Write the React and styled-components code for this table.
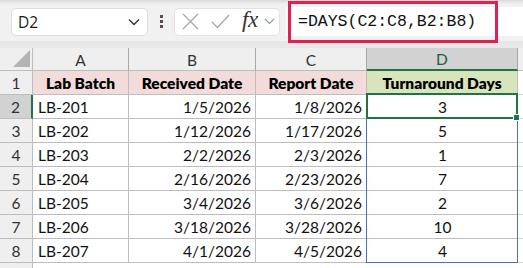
import React from "react";
import styled, { createGlobalStyle } from "styled-components";

const rows = [
  ["LB-201", "1/5/2026", "1/8/2026", "3"],
  ["LB-202", "1/12/2026", "1/17/2026", "5"],
  ["LB-203", "2/2/2026", "2/3/2026", "1"],
  ["LB-204", "2/16/2026", "2/23/2026", "7"],
  ["LB-205", "3/4/2026", "3/6/2026", "2"],
  ["LB-206", "3/18/2026", "3/28/2026", "10"],
  ["LB-207", "4/1/2026", "4/5/2026", "4"]
];

export default function App() {
  return (
    <>
      <GlobalStyle />
      <Page>
        <Toolbar>
          <NameBox>
            <NameText>D2</NameText>
            <Chevron width="12" height="8" viewBox="0 0 12 8">
              <path d="M1 1.5 L6 6.5 L11 1.5" fill="none" stroke="#333" strokeWidth="1.4" />
            </Chevron>
          </NameBox>
          <Dots>
            <i />
            <i />
            <i />
          </Dots>
          <FxBox>
            <svg width="17" height="17" viewBox="0 0 17 17">
              <path d="M1 1 L16 16 M16 1 L1 16" stroke="#a8a8a8" strokeWidth="1.3" />
            </svg>
            <svg width="19" height="15" viewBox="0 0 19 15">
              <path d="M1 8 L6.5 13.5 L18 1" fill="none" stroke="#a8a8a8" strokeWidth="1.3" />
            </svg>
            <Fx>fx</Fx>
            <svg width="11" height="7" viewBox="0 0 11 7">
              <path d="M1 1 L5.5 5.5 L10 1" fill="none" stroke="#999" strokeWidth="1.2" />
            </svg>
          </FxBox>
          <FormulaBox>
            <Formula>=DAYS(C2:C8,B2:B8)</Formula>
          </FormulaBox>
        </Toolbar>
        <Band />
        <Sheet>
          <Corner>
            <svg width="18" height="18" viewBox="0 0 18 18">
              <path d="M17 0 L17 17 L0 17 Z" fill="#b4b4b4" />
            </svg>
          </Corner>
          {["A", "B", "C", "D"].map((c) => (
            <ColHead key={c} $active={c === "D"}>
              {c}
            </ColHead>
          ))}
          <Filler $head />

          <RowHead>1</RowHead>
          <HeadCell>Lab Batch</HeadCell>
          <HeadCell>Received Date</HeadCell>
          <HeadCell>Report Date</HeadCell>
          <HeadCell $green>Turnaround Days</HeadCell>
          <Filler />

          {rows.map((r, i) => (
            <React.Fragment key={r[0]}>
              <RowHead $active={i === 0}>{i + 2}</RowHead>
              <Cell>{r[0]}</Cell>
              <Cell $right>{r[1]}</Cell>
              <Cell $right>{r[2]}</Cell>
              <Cell $center $range $current={i === 0} $last={i === rows.length - 1}>
                {r[3]}
                {i === 0 && <Handle />}
              </Cell>
              <Filler />
            </React.Fragment>
          ))}
          <RowHead $blank />
        </Sheet>
      </Page>
    </>
  );
}

const GlobalStyle = createGlobalStyle`
  body {
    margin: 0;
    background: #fff;
  }
  * {
    box-sizing: border-box;
  }
`;

const Page = styled.div`
  width: 523px;
  height: 268px;
  overflow: hidden;
  background: #fff;
`;

const Toolbar = styled.div`
  height: 41px;
  display: flex;
  align-items: center;
  padding: 2px 0 0 11px;
  background: linear-gradient(#d9d9d9 0px, #ececec 3px, #f1f1f1 5px, #f1f1f1 100%);
`;

const NameBox = styled.div`
  width: 137px;
  height: 28px;
  background: #fff;
  border: 1px solid #dedede;
  border-radius: 5px;
  display: flex;
  align-items: center;
  justify-content: space-between;
  padding: 0 7px 0 6px;
`;

const NameText = styled.span`
  font-family: "Open Sans", "Noto Sans", sans-serif;
  font-size: 15.5px;
  color: #1b1b1b;
`;

const Chevron = styled.svg`
  display: block;
`;

const Dots = styled.div`
  width: 26px;
  display: flex;
  flex-direction: column;
  align-items: center;
  gap: 2px;
  i {
    width: 3px;
    height: 3px;
    background: #5e4c3c;
  }
`;

const FxBox = styled.div`
  width: 106px;
  height: 28px;
  background: #fff;
  border: 1px solid #e2e2e2;
  border-radius: 5px;
  display: flex;
  align-items: center;
  padding: 0 4px 0 7px;
  gap: 12px;
  svg:last-child {
    margin-left: -6px;
  }
`;

const Fx = styled.span`
  font-family: "Liberation Serif", serif;
  font-style: italic;
  font-size: 23px;
  color: #333;
  line-height: 1;
  margin-top: -4px;
  letter-spacing: -0.5px;
`;

const FormulaBox = styled.div`
  margin-left: 6px;
  flex: 1;
  height: 29px;
  background: #fff;
  position: relative;
  display: flex;
  align-items: center;
  padding-left: 12px;
  &::after {
    content: "";
    position: absolute;
    left: 2px;
    top: -6px;
    width: 204px;
    height: 36px;
    border: 3px solid #e0204f;
  }
`;

const Formula = styled.span`
  font-family: "Liberation Mono", monospace;
  font-size: 16.5px;
  color: #111;
`;

const Band = styled.div`
  height: 7px;
  background: #e8e8eb;
`;

const Sheet = styled.div`
  display: grid;
  grid-template-columns: 33px 96px 127px 111px 151px 5px;
  grid-template-rows: 23px repeat(8, 24px) 5px;
  font-family: "Lato", "Liberation Sans", sans-serif;
  font-size: 15.5px;
  color: #111;
`;

const Corner = styled.div`
  background: #efefef;
  border-right: 1px solid #bdbdbd;
  border-bottom: 1px solid #bdbdbd;
  display: flex;
  align-items: flex-end;
  justify-content: flex-end;
  padding: 0 1px 2px 0;
`;

const ColHead = styled.div`
  background: ${(p) => (p.$active ? "#d2d2d2" : "#efefef")};
  color: ${(p) => (p.$active ? "#17603a" : "#333")};
  border-right: 1px solid #a8a8a8;
  border-bottom: ${(p) => (p.$active ? "2px solid #217346" : "1px solid #bdbdbd")};
  display: flex;
  align-items: center;
  justify-content: center;
  padding-top: 1px;
`;

const RowHead = styled.div`
  background: ${(p) => (p.$active ? "#d2d2d2" : "#efefef")};
  color: #333;
  border-right: ${(p) => (p.$active ? "2px solid #217346" : "1px solid #bdbdbd")};
  border-bottom: ${(p) => (p.$blank ? "none" : "1px solid #bdbdbd")};
  display: flex;
  align-items: center;
  justify-content: center;
`;

const HeadCell = styled.div`
  background: ${(p) => (p.$green ? "#d8e4bc" : "#f2dcdb")};
  font-weight: 800;
  color: #000;
  border-right: 1px solid #bdbdbd;
  border-bottom: 1px solid #bdbdbd;
  display: flex;
  align-items: center;
  justify-content: center;
`;

const Filler = styled.div`
  background: ${(p) => (p.$head ? "#efefef" : "#fff")};
  border-bottom: 1px solid ${(p) => (p.$head ? "#bdbdbd" : "#d4d4d4")};
`;

const Cell = styled.div`
  position: relative;
  background: #fff;
  border-right: 1px solid #bdbdbd;
  border-bottom: 1px solid #bdbdbd;
  display: flex;
  align-items: center;
  justify-content: ${(p) => (p.$right ? "flex-end" : p.$center ? "center" : "flex-start")};
  padding: 1px 4px 0 5px;

  ${(p) =>
    p.$range &&
    `
    &::before {
      content: "";
      position: absolute;
      left: -1px;
      right: -1px;
      top: -1px;
      bottom: -1px;
      border-left: 1px solid #4a72c4;
      border-right: 1px solid #4a72c4;
      border-bottom: ${p.$last ? "1px solid #4a72c4" : "none"};
      pointer-events: none;
    }
  `}

  ${(p) =>
    p.$current &&
    `
    &::after {
      content: "";
      position: absolute;
      left: -1px;
      right: -1px;
      top: -2px;
      bottom: -1px;
      border: 2px solid #217346;
      pointer-events: none;
    }
  `}
`;

const Handle = styled.span`
  position: absolute;
  right: -3px;
  bottom: -3px;
  width: 5px;
  height: 5px;
  background: #217346;
  border: 1px solid #fff;
  box-sizing: content-box;
  z-index: 2;
`;
